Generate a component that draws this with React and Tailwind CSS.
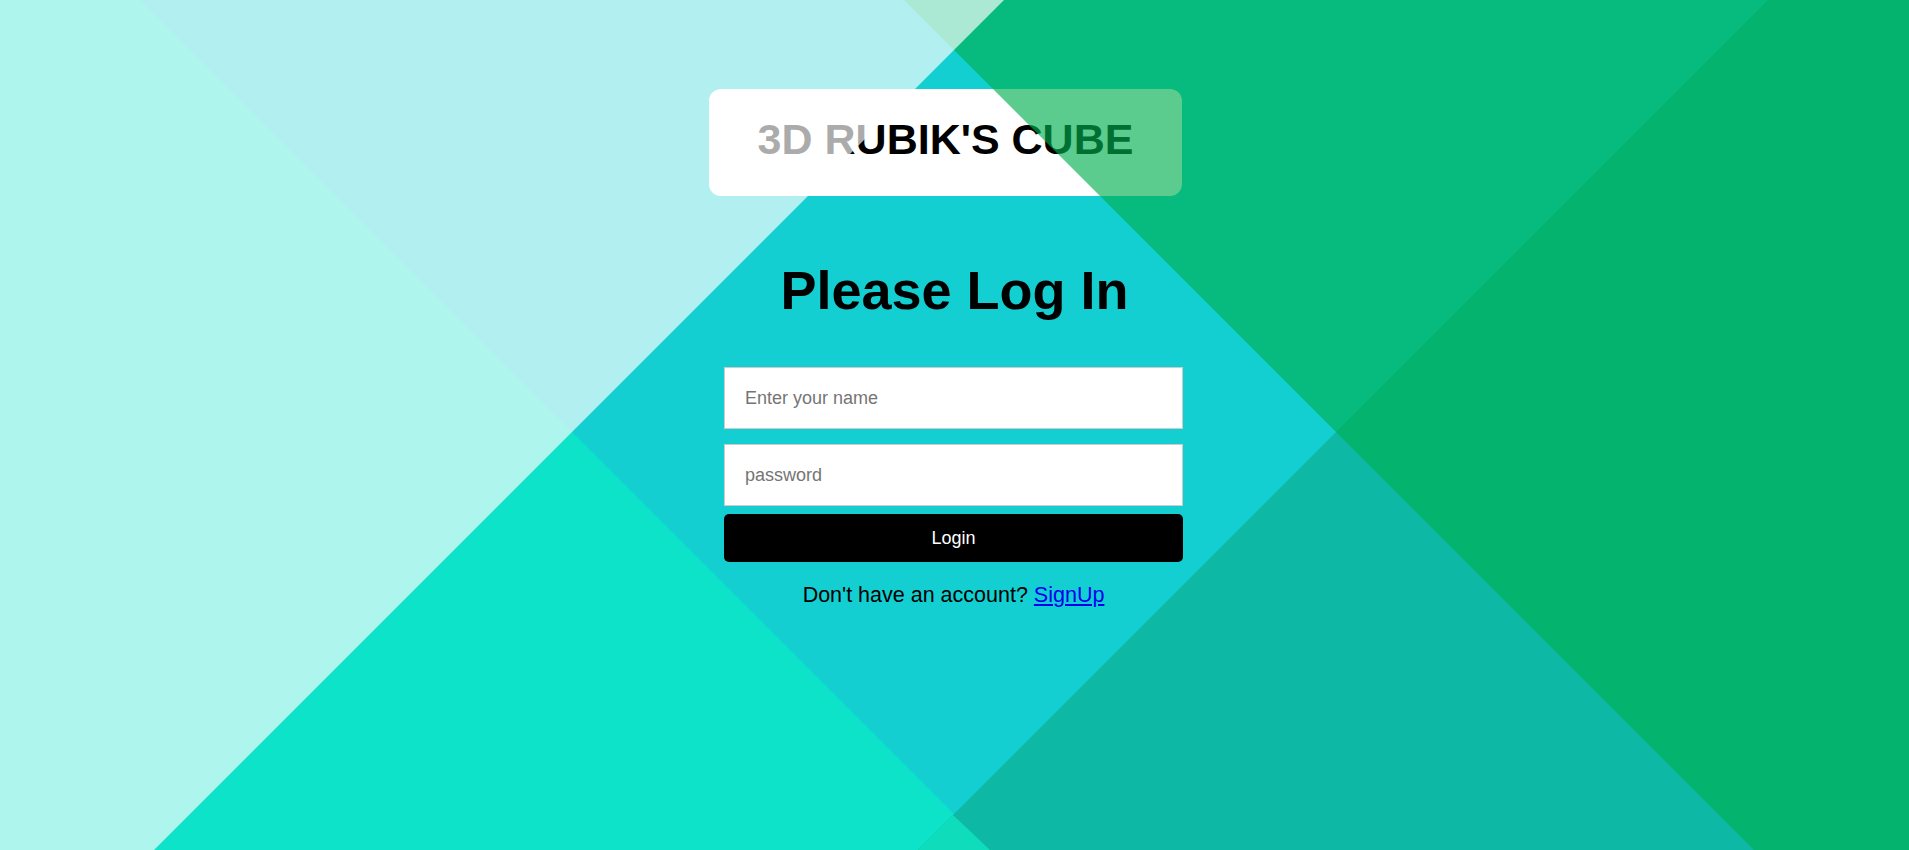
import React from "react";

function BaseArt() {
  return (
    <svg
      className="absolute inset-0 w-full h-full"
      viewBox="0 0 1909 850"
      preserveAspectRatio="none"
    >
      <rect x="0" y="0" width="1909" height="850" fill="#13cfd1" />
      <polygon points="0,0 140,0 990,850 0,850" fill="#0ce3c8" />
      <polygon points="1768,0 1909,0 1909,850 918,850" fill="#0db9a5" />
      <polygon points="953,815 990,850 918,850" fill="#0fdcba" />
    </svg>
  );
}

function OverlayArt() {
  return (
    <svg
      className="absolute inset-0 w-full h-full pointer-events-none z-10"
      viewBox="0 0 1909 850"
      preserveAspectRatio="none"
    >
      <polygon points="904,0 1909,0 1909,850 1754,850" fill="rgb(0,175,78)" fillOpacity="0.64" />
      <polygon points="0,0 1004,0 154,850 0,850" fill="#ffffff" fillOpacity="0.67" />
    </svg>
  );
}

export default function App() {
  return (
    <div
      className="relative w-full h-[850px] overflow-hidden"
      style={{ fontFamily: '"Liberation Sans", Arial, sans-serif' }}
    >
      <BaseArt />
      <div className="relative flex flex-col items-center">
        <div className="mt-[89px] mr-[18px] h-[107px] w-[473px] rounded-[12px] bg-white flex items-center justify-center">
          <h2 className="text-[43px] font-bold leading-none text-black pb-[6px]">
            3D RUBIK'S CUBE
          </h2>
        </div>
        <h1 className="mt-[67px] text-[54px] font-bold leading-none text-black">
          Please Log In
        </h1>
        <form
          className="mt-[50px] mr-[2px] w-[459px] flex flex-col"
          onSubmit={(e) => e.preventDefault()}
        >
          <input
            type="text"
            placeholder="Enter your name"
            className="h-[62px] w-full bg-white border border-[#cccccc] px-[20px] text-[18px] text-black placeholder:text-[#757575] outline-none"
          />
          <input
            type="password"
            placeholder="password"
            className="mt-[15px] h-[62px] w-full bg-white border border-[#cccccc] px-[20px] text-[18px] text-black placeholder:text-[#757575] outline-none"
          />
          <button
            type="submit"
            className="mt-[8px] h-[48px] w-full rounded-[5px] bg-black text-white text-[18px]"
          >
            Login
          </button>
        </form>
        <p className="mt-[23px] mr-[2px] text-[21.5px] leading-none text-black">
          Don't have an account?{" "}
          <a href="#" className="text-[#0000ee] underline">
            SignUp
          </a>
        </p>
      </div>
      <OverlayArt />
    </div>
  );
}
